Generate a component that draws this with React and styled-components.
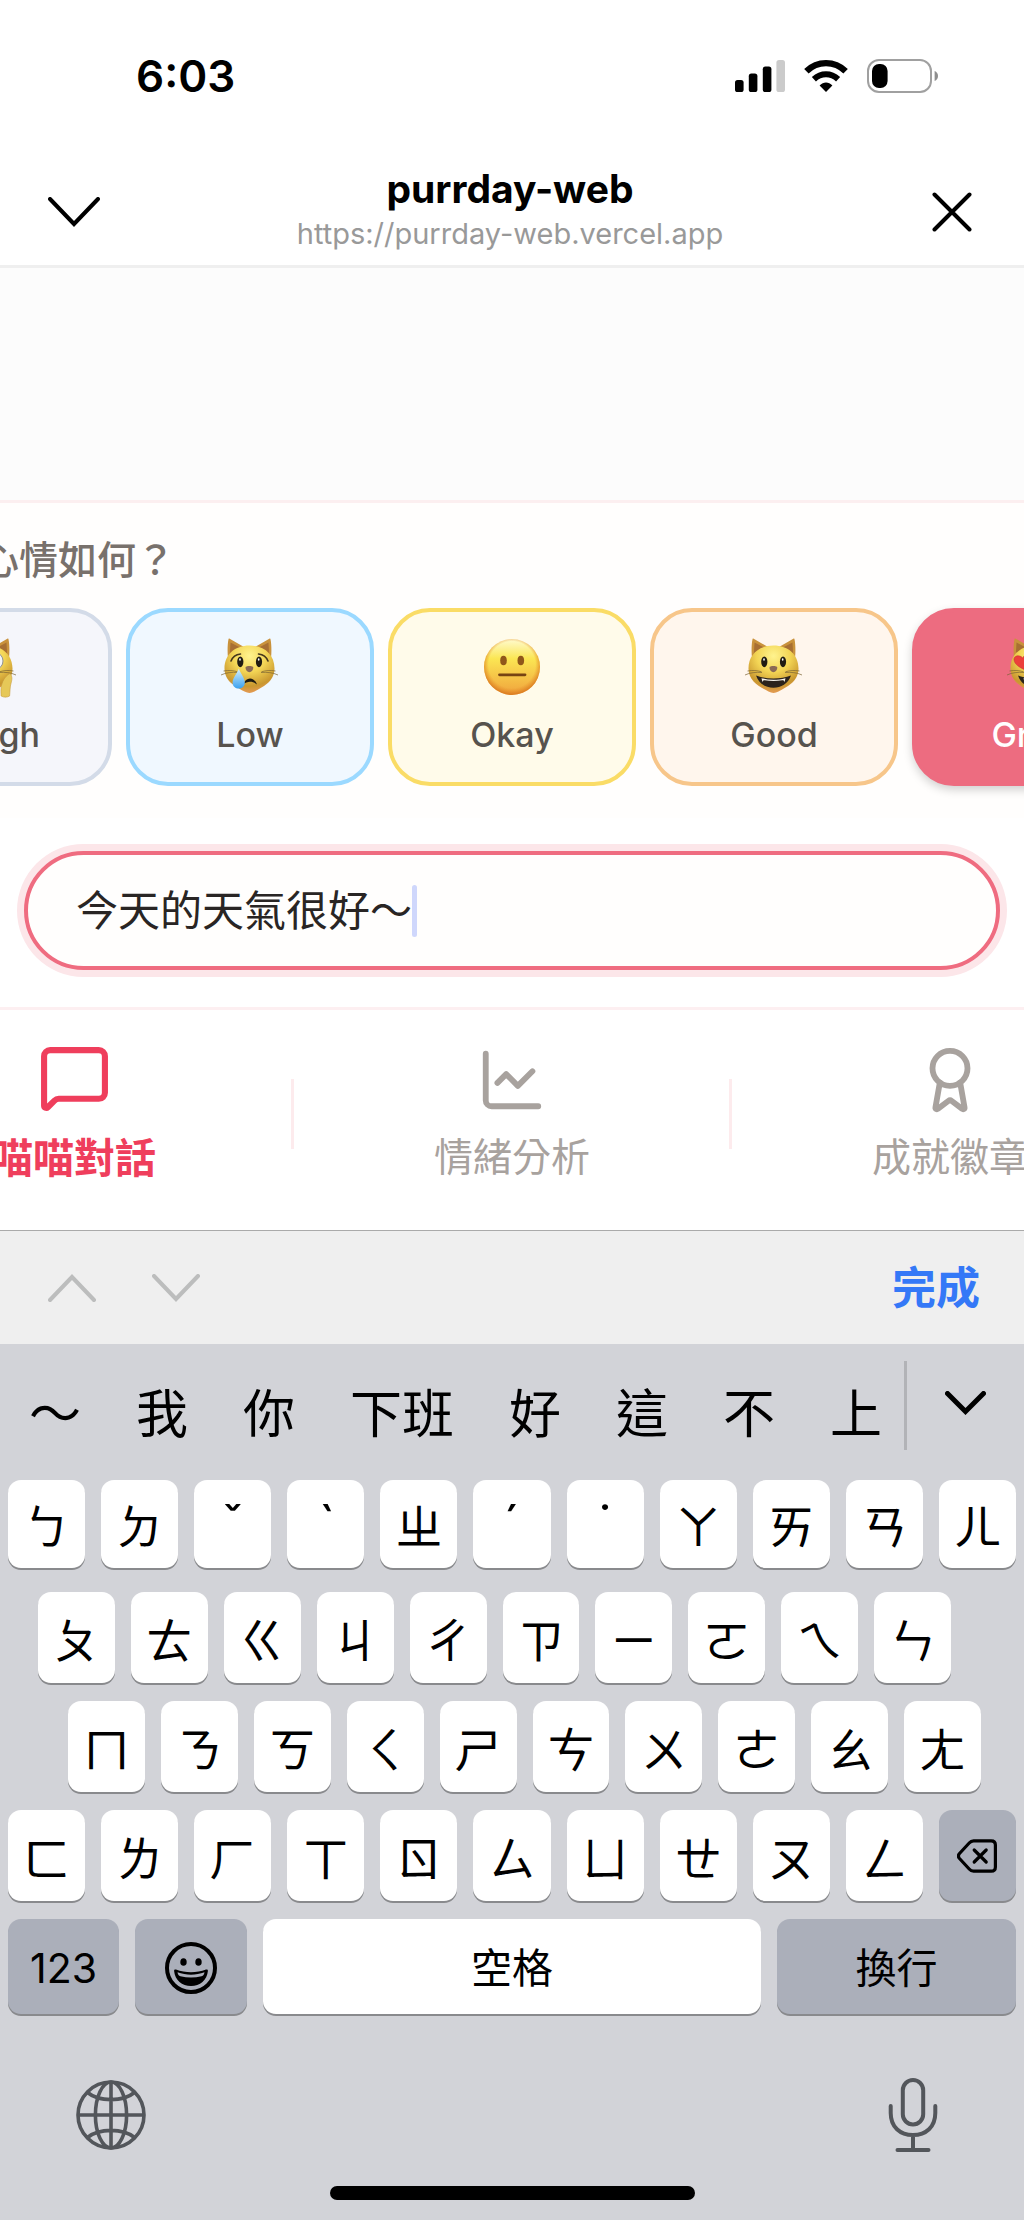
import React, { useState } from 'react';
import styled, { createGlobalStyle, css } from 'styled-components';
import { MessageSquare, ChartLine, Award } from 'lucide-react';

const moods = [
    { name: 'Rough', face: 'shock', bg: '#f5f6fb', border: '#d3dbe8' },
    { name: 'Low', face: 'cry', bg: '#f0f8ff', border: '#9bd9ff' },
    { name: 'Okay', face: 'neutral', bg: '#fffbea', border: '#fadc66' },
    { name: 'Good', face: 'happy', bg: '#fff6ed', border: '#f7c68a' },
    { name: 'Great', face: 'love', bg: '#ed6c80', border: '#ed6c80', active: true },
];

const tabs = [
    { label: '喵喵對話', icon: MessageSquare, active: true },
    { label: '情緒分析', icon: ChartLine },
    { label: '成就徽章', icon: Award },
];

const candidates = ['～', '我', '你', '下班', '好', '這', '不', '上'];

const toneMarks = ['ˇ', 'ˋ', 'ˊ', '˙'];

const keyRows = [
    { start: 8, end: 8, first: true, keys: ['ㄅ', 'ㄉ', 'ˇ', 'ˋ', 'ㄓ', 'ˊ', '˙', 'ㄚ', 'ㄞ', 'ㄢ', 'ㄦ'] },
    { start: 38, end: 73, keys: ['ㄆ', 'ㄊ', 'ㄍ', 'ㄐ', 'ㄔ', 'ㄗ', 'ㄧ', 'ㄛ', 'ㄟ', 'ㄣ'] },
    { start: 68, end: 43, keys: ['ㄇ', 'ㄋ', 'ㄎ', 'ㄑ', 'ㄕ', 'ㄘ', 'ㄨ', 'ㄜ', 'ㄠ', 'ㄤ'] },
    { start: 8, end: 8, keys: ['ㄈ', 'ㄌ', 'ㄏ', 'ㄒ', 'ㄖ', 'ㄙ', 'ㄩ', 'ㄝ', 'ㄡ', 'ㄥ', 'delete'] },
];

function Chevron({ width, height, stroke, up }) {
    const inset = stroke / 2;
    const top = up ? height - inset : inset;
    const tip = up ? inset + 1 : height - inset - 1;
    return (
        <svg width={width} height={height} viewBox={`0 0 ${width} ${height}`} fill="none" stroke="currentColor" strokeWidth={stroke} strokeLinecap="round" strokeLinejoin="miter">
            <path d={`M${inset} ${top}L${width / 2} ${tip}L${width - inset} ${top}`} />
        </svg>
    )
}

function CloseIcon() {
    return (
        <svg width="40" height="40" viewBox="0 0 40 40" stroke="currentColor" strokeWidth="4" strokeLinecap="round">
            <path d="M2.5 2.5l35 35M37.5 2.5l-35 35" />
        </svg>
    )
}

function SignalIcon() {
    return (
        <svg width="50" height="34" viewBox="0 0 50 34">
            <rect x="0" y="21" width="8.6" height="12" rx="2.6" />
            <rect x="13.8" y="14.6" width="8.6" height="18.4" rx="2.6" />
            <rect x="27.8" y="7.6" width="8.6" height="25.4" rx="2.6" />
            <rect x="41.4" y="1" width="8.6" height="32" rx="2.6" fill="#cbcbcb" />
        </svg>
    )
}

function WifiIcon() {
    return (
        <svg width="44" height="34" viewBox="0 0 44 34" fill="none" stroke="#000">
            <path d="M2.4 12.2C13.5 1.4 30.5 1.4 41.6 12.2" strokeWidth="6.4" />
            <path d="M9.9 20.2C17 13.6 27 13.6 34.1 20.2" strokeWidth="6" />
            <path d="M15.6 26.6C19.4 22.6 24.6 22.6 28.4 26.6L22 33z" fill="#000" stroke="none" />
        </svg>
    )
}

function BatteryIcon() {
    return (
        <svg width="72" height="34" viewBox="0 0 72 34">
            <rect x="1" y="1" width="63" height="32" rx="11" fill="none" stroke="#a0a0a0" strokeWidth="2" />
            <rect x="5" y="5" width="15.6" height="24" rx="7" />
            <path d="M67.6 12c2.2.8 3.4 2.7 3.4 5s-1.2 4.200-3.400 5z" fill="#8e8e8e" />
        </svg>
    )
}

function Heart({ x, tilt }) {
    return (
        <path
            transform={`translate(${x} 24) rotate(${tilt})`}
            d="M0 8C-5 4.500-9 1-9-3.500-9-8-2.500-8.500 0-4 2.500-8.500 9-8 9-3.500 9 1 5 4.500 0 8z"
            fill="#ec3f3b"
            stroke="#c92b30"
            strokeWidth=".5"
        />
    )
}

function CatFace({ mood }) {
    return (
        <svg width="58" height="60" viewBox="0 0 58 60" aria-hidden="true">
            <defs>
                <radialGradient id={`fur-${mood}`} cx="50%" cy="22%" r="75%">
                    <stop offset="0" stopColor="#fff38e" />
                    <stop offset=".45" stopColor="#f3d555" />
                    <stop offset=".85" stopColor="#c9972f" />
                    <stop offset="1" stopColor="#e09a4e" />
                </radialGradient>
                <linearGradient id={`tear-${mood}`} x1="0" y1="0" x2="0" y2="1">
                    <stop offset="0" stopColor="#d8f2ff" />
                    <stop offset="1" stopColor="#3ba1ee" />
                </linearGradient>
            </defs>
            <path d="M7.500 1.200C7.500.4 8 .3 8.700.7L23 9 7 20C6.300 14 6.500 6 7.500 1.200zM49.500 1.200C49.500.4 49 .3 48.300.7L34 9 50 20C50.700 14 50.500 6 49.500 1.200z" fill="#c9923c" />
            <path d="M9.500 4.500L19 9.500 8.800 17zM47.500 4.500L38 9.500 48.200 17z" fill="#a86f33" />
            <path d="M3.500 30.500C3.500 16.500 14 7.500 28.500 7.500S53.500 16.500 53.500 30.500C53.500 44 41 49.500 33.500 53.500 30 55.400 27 55.400 23.500 53.500 16 49.500 3.500 44 3.500 30.500z" fill={`url(#fur-${mood})`} />
            <path d="M0 37c5-2.500 11-3 17-2.500M2.500 33c5-1 10-.5 14 .8M57 37c-5-2.500-11-3-17-2.500M54.500 33c-5-1-10-.5-14 .8" fill="none" stroke="#7b6433" strokeWidth=".7" />
            {(mood === 'cry' || mood === 'happy') && (
                <g fill="#1f1b12">
                    <ellipse cx="19.300" cy="23.800" rx="3.100" ry="5.400" />
                    <ellipse cx="38" cy="23.800" rx="3.100" ry="5.400" />
                    <ellipse cx="19" cy="21.500" rx=".8" ry="1.300" fill="#fff" />
                    <ellipse cx="37.700" cy="21.500" rx=".8" ry="1.300" fill="#fff" />
                </g>
            )}
            {mood === 'cry' && (
                <g>
                    <path d="M10 23c1.500-4 5-6.500 9.500-7M47 23c-1.500-4-5-6.500-9.500-7" fill="none" stroke="#47381c" strokeWidth="1.600" strokeLinecap="round" />
                    <path d="M22 46.500c3-8 11-8 14 0-4.500-3.600-9.500-3.600-14 0z" fill="#1f1b12" />
                    <path d="M17.800 30.500c1.500 5 6 9 6 14 0 8-12.200 8-12.200 0 0-5 4.800-9 6.200-14z" fill={`url(#tear-${mood})`} />
                </g>
            )}
            {(mood === 'happy' || mood === 'love') && (
                <g>
                    <path d="M11 37.500c10 4 25 4 35 0C43 46 36 49.700 28.500 49.700S14 46 11 37.500z" fill="#2b231c" />
                    <path d="M16.500 40.200c8 2.200 16 2.200 24 0l-1 4c-.3-1.400-1-2-2.200-1.900-6 .9-11.600.9-17.600 0-1.200-.1-1.900.5-2.200 1.900z" fill="#f8f4ec" />
                </g>
            )}
            {mood === 'love' && (
                <g>
                    <Heart x={16.500} tilt={-10} />
                    <Heart x={40.500} tilt={10} />
                </g>
            )}
            {mood === 'shock' && (
                <g>
                    <ellipse cx="18" cy="23" rx="7" ry="8" fill="#f4f6f8" stroke="#8c8f94" strokeWidth="1" />
                    <ellipse cx="37" cy="23" rx="7" ry="8" fill="#f4f6f8" stroke="#8c8f94" strokeWidth="1" />
                    <circle cx="18" cy="23" r="2" />
                    <circle cx="37" cy="23" r="2" />
                    <ellipse cx="28.500" cy="44" rx="6" ry="8" fill="#2b231c" />
                    <path d="M51 35.500c-4 2-7 6-8.500 12-1 4.500-.4 8-.4 10.500 2.500 1.600 6.500 1.400 8.500 0 .6-5 .2-9 1.500-13 .8-3 1.700-6.500-1.100-9.500zM6 35.500c4 2 7 6 8.500 12 1 4.500.4 8 .4 10.500-2.500 1.600-6.500 1.400-8.500 0-.6-5-.2-9-1.500-13-.8-3-1.700-6.500 1.100-9.500z" fill="#e6c858" stroke="#c79c3e" strokeWidth=".6" />
                </g>
            )}
            <path d="M24.500 29.500c0-2 7.800-2 7.800 0 0 2.200-1.800 4.700-3.900 4.700s-3.900-2.500-3.900-4.700z" fill="#8a6a55" />
        </svg>
    )
}

function NeutralFace() {
    return (
        <svg width="58" height="60" viewBox="0 0 58 60" aria-hidden="true">
            <defs>
                <linearGradient id="skin" x1="0" y1="0" x2="0" y2="1">
                    <stop offset="0" stopColor="#fffbd0" />
                    <stop offset=".35" stopColor="#fbe653" />
                    <stop offset="1" stopColor="#f0a23c" />
                </linearGradient>
                <radialGradient id="edge" cx="50%" cy="46%" r="52%">
                    <stop offset=".8" stopColor="#e58a25" stopOpacity="0" />
                    <stop offset="1" stopColor="#d9781f" stopOpacity=".8" />
                </radialGradient>
            </defs>
            <circle cx="29" cy="29" r="28" fill="url(#skin)" />
            <circle cx="29" cy="29" r="28" fill="url(#edge)" />
            <ellipse cx="20.500" cy="22.500" rx="3.300" ry="4.800" fill="#90571a" />
            <ellipse cx="37.800" cy="22.500" rx="3.300" ry="4.800" fill="#90571a" />
            <path d="M16.500 36.800h25.500" stroke="#774313" strokeWidth="2.800" strokeLinecap="round" />
        </svg>
    )
}

function DeleteIcon() {
    return (
        <svg width="40" height="34" viewBox="0 0 40 34" fill="none" stroke="#000" strokeWidth="3.200" strokeLinejoin="round" strokeLinecap="round">
            <path d="M2.500 14.500L12.200 4C13.500 2.500 14.700 1.900 16.600 1.900H34.200C37 1.900 38.400 3.300 38.400 6.100V27.900C38.400 30.700 37 32.100 34.200 32.100H16.600C14.700 32.100 13.500 31.500 12.200 30L2.500 19.500C1.100 17.900 1.100 16.100 2.500 14.500z" />
            <path d="M17.200 11l12 12M29.200 11l-12 12" />
        </svg>
    )
}

function SmileIcon() {
    return (
        <svg width="54" height="54" viewBox="0 0 54 54">
            <circle cx="27" cy="27" r="24" fill="none" stroke="#000" strokeWidth="4" />
            <ellipse cx="19.500" cy="21" rx="3.200" ry="3.800" />
            <ellipse cx="34.500" cy="21" rx="3.200" ry="3.800" />
            <path d="M12 28.500c9.500 3.600 20.500 3.600 30 0 1.400-.4 2 .2 1.900 1.600C43 39.500 36 45 27 45S11 39.500 10.100 30.100c-.1-1.400.5-2 1.900-1.600z" />
            <path d="M13.500 31.300c8.700 3.200 18.300 3.200 27 0-.4 2.400-1.200 3.500-3 4-6.900 1.600-14.100 1.600-21 0-1.800-.5-2.600-1.600-3-4z" fill="#abafba" />
        </svg>
    )
}

function GlobeIcon() {
    return (
        <svg width="70" height="70" viewBox="0 0 70 70" fill="none" stroke="currentColor" strokeWidth="3.600">
            <circle cx="35" cy="35" r="33" />
            <ellipse cx="35" cy="35" rx="15.600" ry="33" />
            <path d="M35 2v66M2 35h66M11.500 12.500C17 17 25 19.600 35 19.600S53 17 58.500 12.500M11.500 57.500C17 53 25 50.400 35 50.400S53 53 58.500 57.500" />
        </svg>
    )
}

function MicIcon() {
    return (
        <svg width="50" height="76" viewBox="0 0 50 76" fill="none" stroke="currentColor" strokeWidth="4" strokeLinecap="round">
            <rect x="14.800" y="3" width="20.400" height="44.500" rx="10.200" />
            <path d="M2.700 29v7C2.700 50 12 58 25 58S47.300 50 47.300 36v-7M25 58v14M9.500 73h31" />
        </svg>
    )
}

function App() {
    const [message, setMessage] = useState('今天的天氣很好～');

    return (
        <Page>
            <GlobalStyle />
            <StatusBar>
                <Clock>6:03</Clock>
                <StatusIcons>
                    <SignalIcon />
                    <WifiIcon />
                    <BatteryIcon />
                </StatusIcons>
            </StatusBar>

            <Header>
                <HeaderButton aria-label="Collapse"><Chevron width={52} height={30} stroke={4} /></HeaderButton>
                <Titles>
                    <Title>purrday-web</Title>
                    <Url href="https://purrday-web.vercel.app">https://purrday-web.vercel.app</Url>
                </Titles>
                <HeaderButton aria-label="Close" $end><CloseIcon /></HeaderButton>
            </Header>

            <Conversation />

            <MoodPanel>
                <MoodQuestion>心情如何？</MoodQuestion>
                <MoodList>
                    {moods.map((mood) => (
                        <MoodCard key={mood.name} $bg={mood.bg} $border={mood.border} $active={mood.active}>
                            {mood.face === 'neutral' ? <NeutralFace /> : <CatFace mood={mood.face} />}
                            {mood.name}
                        </MoodCard>
                    ))}
                </MoodList>
            </MoodPanel>

            <Composer>
                <InputPill>
                    <MessageInput aria-label="Message" value={message} onChange={(e) => setMessage(e.target.value)} />
                    <Caret />
                </InputPill>
            </Composer>

            <TabBar>
                {tabs.map(({ label, icon: Icon, active }) => (
                    <Tab key={label} href="#" $active={active}>
                        <Icon size={active ? 73 : 70} />
                        {label}
                    </Tab>
                ))}
            </TabBar>

            <AccessoryBar>
                <FieldArrows>
                    <IconButton aria-label="Previous"><Chevron width={48} height={28} stroke={4} up /></IconButton>
                    <IconButton aria-label="Next"><Chevron width={48} height={28} stroke={4} /></IconButton>
                </FieldArrows>
                <DoneButton>完成</DoneButton>
            </AccessoryBar>

            <Keyboard>
                <CandidateBar>
                    <CandidateList>
                        {candidates.map((word) => <Candidate key={word}>{word}</Candidate>)}
                    </CandidateList>
                    <ExpandButton aria-label="More"><Chevron width={41} height={24} stroke={5} /></ExpandButton>
                </CandidateBar>

                {keyRows.map((row) => (
                    <KeyRow key={row.keys[0]} $start={row.start} $end={row.end} $first={row.first}>
                        {row.keys.map((key) => (
                            key === 'delete'
                                ? <Key key={key} $dark aria-label="Delete"><DeleteIcon /></Key>
                                : <Key key={key} $tone={toneMarks.includes(key)}>{key}</Key>
                        ))}
                    </KeyRow>
                ))}

                <BottomRow>
                    <WordKey $dark>123</WordKey>
                    <WordKey $dark aria-label="Emoji"><SmileIcon /></WordKey>
                    <WordKey>空格</WordKey>
                    <WordKey $dark>換行</WordKey>
                </BottomRow>

                <SystemRow>
                    <IconButton aria-label="Switch keyboard"><GlobeIcon /></IconButton>
                    <IconButton aria-label="Dictate"><MicIcon /></IconButton>
                </SystemRow>
                <HomeIndicator />
            </Keyboard>
        </Page>
    )
}

export default App;

const GlobalStyle = createGlobalStyle`
    *, *::before, *::after {
        box-sizing: border-box;
    }

    body {
        margin: 0;
        background: #fff;
        font-family: Inter, "Noto Sans CJK TC", sans-serif;
    }

    button, input {
        font-family: inherit;
    }

    svg {
        display: block;
        flex: none;
    }
`

const Page = styled.div`
    display: flex;
    flex-direction: column;
    overflow: hidden;
    background: #fff;
    color: #000;
`

const StatusBar = styled.div`
    display: flex;
    align-items: center;
    justify-content: space-between;
    height: 152px;
    padding: 0 85px 0 136px;
`

const Clock = styled.span`
    font-size: 44px;
    font-weight: 600;
    line-height: 56px;
`

const StatusIcons = styled.div`
    display: flex;
    align-items: center;
    gap: 19px;
`

const IconButton = styled.button`
    display: flex;
    padding: 0;
    border: 0;
    background: none;
    color: inherit;
`

const Header = styled.header`
    display: grid;
    grid-template-columns: 1fr auto 1fr;
    align-items: center;
    padding: 12px 52px 11px 48px;
    border-bottom: 3px solid #efefef;
`

const HeaderButton = styled(IconButton)`
    justify-self: ${(props) => (props.$end ? 'end' : 'start')};
    padding-top: 6px;
`

const Titles = styled.div`
    display: flex;
    flex-direction: column;
    align-items: center;
`

const Title = styled.h1`
    margin: 0;
    font-size: 39px;
    font-weight: 700;
    line-height: 50px;
`

const Url = styled.a`
    color: #999;
    font-size: 29px;
    line-height: 40px;
    text-decoration: none;
`

const Conversation = styled.main`
    height: 232px;
    background: #fcfcfc;
`

const MoodPanel = styled.section`
    padding: 32px 0;
    border-top: 3px solid #fceff0;
    background: #fffefd;
`

const MoodQuestion = styled.p`
    margin: 0 0 23px -20px;
    color: #78716c;
    font-size: 39px;
    font-weight: 500;
    line-height: 50px;
`

const MoodList = styled.div`
    display: flex;
    justify-content: center;
    gap: 14px;
`

const MoodCard = styled.button`
    display: flex;
    flex: none;
    flex-direction: column;
    align-items: center;
    gap: 15px;
    width: 248px;
    height: 178px;
    padding: 26px 0 0;
    border: 4px solid ${(props) => props.$border};
    border-radius: 42px;
    background: ${(props) => props.$bg};
    color: ${(props) => (props.$active ? '#fff' : '#57534e')};
    box-shadow: ${(props) => (props.$active ? '0 4px 10px rgba(0, 0, 0, .18)' : 'none')};
    font-size: 34px;
    font-weight: 500;
    line-height: 44px;
`

const Composer = styled.section`
    padding: 33px 24px 37px;
    border-bottom: 3px solid #fdeff1;
`

const InputPill = styled.div`
    display: flex;
    align-items: center;
    height: 119px;
    padding: 0 48px;
    border: 4px solid #ef6c80;
    border-radius: 60px;
    background: #fffefd;
    box-shadow: 0 0 0 7px #fce6e9;
`

const MessageInput = styled.input`
    width: 8em;
    padding: 0;
    border: 0;
    outline: 0;
    background: transparent;
    color: #292524;
    font-size: 42px;
    line-height: 60px;
`

const Caret = styled.span`
    width: 5px;
    height: 52px;
    border-radius: 3px;
    background: #cfd7fc;
`

const TabBar = styled.nav`
    display: flex;
    justify-content: center;
    height: 220px;
`

const Tab = styled.a`
    position: relative;
    display: flex;
    flex: none;
    flex-direction: column;
    align-items: center;
    gap: 12px;
    width: 438px;
    padding-top: 35px;
    color: #a8a29e;
    font-size: 39px;
    line-height: 60px;
    text-decoration: none;

    ${(props) => props.$active && css`
        gap: 14px;
        padding-top: 31px;
        color: #ef3e5c;
        font-size: 41px;
        font-weight: 600;
    `}

    &:not(:first-child)::before {
        content: '';
        position: absolute;
        top: 69px;
        left: -2px;
        width: 3px;
        height: 70px;
        background: #fdebed;
    }
`

const AccessoryBar = styled.div`
    display: flex;
    align-items: center;
    justify-content: space-between;
    height: 114px;
    padding: 0 44px 0 48px;
    border-top: 1px solid #aaa;
    background: #efefef;
`

const FieldArrows = styled.div`
    display: flex;
    gap: 56px;
    color: #bcbdbd;
`

const DoneButton = styled.button`
    padding: 0;
    border: 0;
    background: none;
    color: #3478f7;
    font-size: 44px;
    font-weight: 600;
    line-height: 60px;
`

const Keyboard = styled.div`
    display: flex;
    flex-direction: column;
    gap: 18px;
    padding-bottom: 20px;
    background: #d2d3d8;
`

const CandidateBar = styled.div`
    display: flex;
    justify-content: space-between;
    height: 118px;
    padding-left: 29px;
`

const CandidateList = styled.div`
    display: flex;
    align-items: center;
    gap: 55px;
    padding-top: 24px;
`

const Candidate = styled.button`
    padding: 0;
    border: 0;
    background: none;
    color: #000;
    font-size: 52px;
    line-height: 72px;
    white-space: nowrap;
`

const ExpandButton = styled.button`
    display: flex;
    align-items: center;
    justify-content: center;
    width: 120px;
    height: 89px;
    margin-top: 17px;
    padding: 0 0 6px;
    border: 0;
    border-left: 3px solid #b2b3b7;
    background: none;
    color: #000;
`

const KeyRow = styled.div`
    display: flex;
    gap: 16px;
    height: ${(props) => (props.$first ? 94 : 91)}px;
    padding: 0 ${(props) => props.$end}px ${(props) => (props.$first ? 6 : 0)}px ${(props) => props.$start}px;
`

const Key = styled.button`
    display: flex;
    flex: 1 1 0;
    align-items: center;
    justify-content: center;
    min-width: 0;
    padding: 0;
    border: 0;
    border-radius: 13px;
    background: ${(props) => (props.$dark ? '#abafba' : '#fff')};
    box-shadow: 0 2px 0 #898a8d;
    color: #000;
    font-family: ${(props) => (props.$tone ? 'Inter' : '"Noto Sans CJK TC"')}, sans-serif;
    font-size: ${(props) => (props.$tone ? 50 : 47)}px;
    line-height: 60px;
`

const BottomRow = styled.div`
    display: grid;
    grid-template-columns: 111px 112px 1fr 239px;
    gap: 16px;
    height: 95px;
    padding: 0 8px;
`

const WordKey = styled(Key)`
    padding-top: 3px;
    font-family: inherit;
    font-size: 41px;
`

const SystemRow = styled.div`
    display: flex;
    align-items: center;
    justify-content: space-between;
    margin-top: 45px;
    padding: 0 86px 0 76px;
    color: #53565b;
`

const HomeIndicator = styled.div`
    width: 365px;
    height: 14px;
    margin: 15px auto 0;
    border-radius: 7px;
    background: #000;
`
